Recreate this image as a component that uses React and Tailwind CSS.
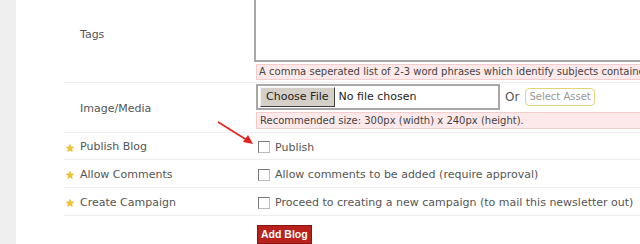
export default function App() {
  const font = { fontFamily: '"DejaVu Sans", Verdana, sans-serif' };
  const Star = () => (
    <svg width="8" height="8" viewBox="0 0 10 10" className="shrink-0">
      <polygon points="5,0.5 6.3,3.6 9.6,3.8 7.1,6 7.9,9.4 5,7.6 2.1,9.4 2.9,6 0.4,3.8 3.7,3.6" fill="#f4c430" stroke="#e0a800" strokeWidth="0.6" />
    </svg>
  );
  const Check = () => (
    <span className="inline-block w-[12px] h-[12px] bg-white border border-t-[#777] border-l-[#777] border-b-[#bbb] border-r-[#bbb] shrink-0" />
  );
  return (
    <div className="relative flex w-[640px] h-[244px] overflow-hidden bg-white text-[#555]" style={font}>
      <div className="w-[16px] h-full bg-[#efefef] shrink-0" />
      <div className="flex-1 pl-[48px]">
        {/* Tags */}
        <div className="flex h-[98px] -mt-[15px] border-b border-[#eeeeee]">
          <div className="w-[192px] flex items-center pl-[16px] pt-[4px] text-[11px]">Tags</div>
          <div className="flex-1 flex flex-col">
            <div className="h-[77px] -ml-[2px] border-l-2 border-b-2 border-l-[#a8a8a8] border-b-[#a8a8a8] bg-white" />
            <div className="mt-[2px] h-[16px] bg-[#fde9e9] border border-[#f5cccc] border-r-0 pl-[2px] text-[10px] leading-[14px] text-[#444] whitespace-nowrap overflow-hidden">
              A comma seperated list of 2-3 word phrases which identify subjects contained
            </div>
          </div>
        </div>
        {/* Image/Media */}
        <div className="flex h-[50px] border-b border-[#eeeeee]">
          <div className="w-[192px] flex items-center pl-[16px] pt-[4px] text-[11px]">Image/Media</div>
          <div className="flex-1 flex flex-col pt-[1px]">
            <div className="flex items-center">
              <div className="w-[244px] h-[26px] border-2 border-[#a8a8a8] flex items-center pl-[2px]">
                <span className="h-[20px] px-[5px] bg-[#d4d0c8] border border-t-[#f4f4f4] border-l-[#f4f4f4] border-b-[#404040] border-r-[#404040] text-[11px] leading-[18px] text-[#222] whitespace-nowrap">Choose File</span>
                <span className="ml-[4px] text-[11px] text-[#222] whitespace-nowrap">No file chosen</span>
              </div>
              <span className="ml-[5px] text-[12px] text-[#555]">Or</span>
              <span className="ml-[6px] h-[18px] px-[3px] border border-[#e2d27a] rounded-[4px] text-[10px] leading-[16px] text-[#999] whitespace-nowrap">Select Asset</span>
            </div>
            <div className="mt-[2px] h-[17px] bg-[#fde9e9] border border-[#f5cccc] border-r-0 pl-[3px] text-[10px] leading-[15px] text-[#444] whitespace-nowrap overflow-hidden">
              Recommended size: 300px (width) x 240px (height).
            </div>
          </div>
        </div>
        {[
          ["Publish Blog", "Publish", "h-[27px]"],
          ["Allow Comments", "Allow comments to be added (require approval)", "h-[28px]"],
          ["Create Campaign", "Proceed to creating a new campaign (to mail this newsletter out)", "h-[28px]"],
        ].map(([l, t, h]) => (
          <div key={l} className={`flex ${h} border-b border-[#eeeeee]`}>
            <div className="w-[192px] flex items-center pl-[2px] pt-[3px] gap-[6px] text-[11px] whitespace-nowrap">
              <Star />
              <span>{l}</span>
            </div>
            <div className="flex-1 flex items-center pl-[2px] pt-[2px] gap-[5px] text-[11px] whitespace-nowrap">
              <Check />
              <span className="pt-[2px]">{t}</span>
            </div>
          </div>
        ))}
        <div className="flex pt-[5px]">
          <div className="w-[192px]" />
          <div className="pl-[1px]">
            <span className="inline-block h-[19px] px-[3px] bg-[#b8211c] border border-[#8a1410] text-white font-bold text-[10.5px] leading-[17px]" style={{ fontFamily: '"Liberation Sans", Arial, sans-serif' }}>Add Blog</span>
          </div>
        </div>
      </div>
      <svg className="absolute left-0 top-0 pointer-events-none" width="640" height="244">
        <line x1="218" y1="122" x2="250" y2="142" stroke="#e8201c" strokeWidth="1.6" />
        <polygon points="253,144 243,142 248,135" fill="#e8201c" />
      </svg>
    </div>
  );
}
